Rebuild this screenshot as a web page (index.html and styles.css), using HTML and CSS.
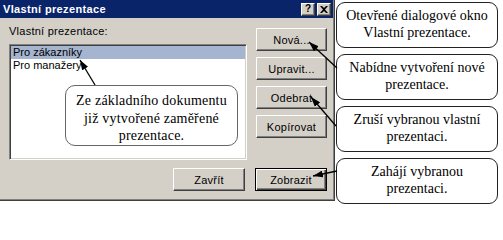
FILE: index.html
```html
<!DOCTYPE html>
<html lang="cs">
<head>
<meta charset="utf-8">
<title>Vlastní prezentace</title>
<link rel="stylesheet" href="styles.css">
</head>
<body>
<div class="page">
  <div class="dialog">
    <div class="titlebar">
      <span class="title">Vlastní prezentace</span>
      <div class="tb-buttons">
        <span class="tb-btn help">?</span>
        <span class="tb-btn close"><svg width="8" height="7" viewBox="0 0 8 7"><path d="M0,0 L2,0 L4,2 L6,0 L8,0 L5,3.5 L8,7 L6,7 L4,5 L2,7 L0,7 L3,3.5 Z" fill="#000"/></svg></span>
      </div>
    </div>
    <div class="body">
      <div class="main">
        <div class="left">
          <div class="label">Vlastní prezentace:</div>
          <div class="list">
            <div class="item selected">Pro zákazníky</div>
            <div class="item">Pro manažery</div>
          </div>
        </div>
        <div class="side">
          <button class="btn">Nová...</button>
          <button class="btn">Upravit...</button>
          <button class="btn">Odebrat</button>
          <button class="btn">Kopírovat</button>
        </div>
      </div>
      <div class="footer">
        <button class="btn">Zavřít</button>
        <button class="btn default">Zobrazit</button>
      </div>
    </div>
  </div>

  <div class="notes">
    <div class="note">Otevřené dialogové okno<br>Vlastní prezentace.</div>
    <div class="note">Nabídne vytvoření nové<br>prezentace.</div>
    <div class="note">Zruší vybranou vlastní<br>prezentaci.</div>
    <div class="note">Zahájí vybranou<br>prezentaci.</div>
  </div>

  <div class="note big">Ze základního dokumentu<br>již vytvořené zaměřené<br>prezentace.</div>

  <svg class="arrows" width="503" height="217" viewBox="0 0 503 217">
    <defs>
      <marker id="ah" viewBox="0 0 10 7" refX="10" refY="3.5" markerWidth="10" markerHeight="7" markerUnits="userSpaceOnUse" orient="auto">
        <path d="M0,0 L10,3.5 L0,7 Z" fill="#000"/>
      </marker>
    </defs>
    <line x1="95" y1="85" x2="80" y2="60" stroke="#000" stroke-width="1.3" marker-end="url(#ah)"/>
    <line x1="337" y1="68" x2="309" y2="42" stroke="#000" stroke-width="1.3" marker-end="url(#ah)"/>
    <line x1="336" y1="126" x2="311" y2="97" stroke="#000" stroke-width="1.3" marker-end="url(#ah)"/>
    <line x1="337" y1="171" x2="313" y2="176" stroke="#000" stroke-width="1.3" marker-end="url(#ah)"/>
  </svg>
</div>
</body>
</html>
```

FILE: styles.css
```css
* { box-sizing: border-box; }

html, body {
  margin: 0;
  padding: 0;
  background: #fff;
}

.page {
  position: relative;
  width: 503px;
  height: 217px;
  display: flex;
  align-items: flex-start;
  background: #fff;
  overflow: hidden;
}

.dialog {
  width: 335px;
  height: 201px;
  background: #d4d0c8;
  border-right: 1px solid #404040;
  border-bottom: 1px solid #404040;
  box-shadow: inset -1px -1px #808080;
  font-family: "Liberation Sans", Arial, sans-serif;
  font-size: 11px;
  letter-spacing: 0.25px;
  color: #000;
  flex: none;
}

.titlebar {
  width: 333px;
  height: 18px;
  background: #0a246a;
  display: flex;
  align-items: center;
  justify-content: space-between;
  padding: 0 2px 0 3px;
}

.title {
  color: #fff;
  font-weight: bold;
  font-size: 11px;
  letter-spacing: 0.35px;
}

.tb-buttons {
  display: flex;
  gap: 2px;
}

.tb-btn {
  width: 14px;
  height: 13px;
  background: #d4d0c8;
  border: 1px solid;
  border-color: #fff #404040 #404040 #fff;
  box-shadow: inset -1px -1px #808080;
  display: flex;
  align-items: center;
  justify-content: center;
  font-weight: bold;
  font-size: 10px;
  line-height: 1;
  letter-spacing: 0;
  color: #000;
}

.body {
  padding: 7px 0 0 9px;
}

.main {
  display: flex;
  gap: 9px;
}

.left {
  width: 238px;
}

.label {
  height: 19px;
  line-height: 13px;
}

.list {
  height: 116px;
  background: #fff;
  border: 1px solid;
  border-color: #808080 #fff #fff #808080;
  box-shadow: inset 1px 1px #404040, inset -1px -1px #d4d0c8;
  padding: 1px 1px 0 1px;
}

.item {
  height: 13px;
  line-height: 13px;
  padding-left: 2px;
  letter-spacing: 0;
}

.item.selected {
  background: #a6b5cf;
}

.side {
  display: flex;
  flex-direction: column;
  gap: 6px;
  padding-top: 3px;
}

.btn {
  width: 71px;
  height: 23px;
  margin: 0;
  padding: 0;
  background: #d4d0c8;
  border: 1px solid;
  border-color: #fff #404040 #404040 #fff;
  box-shadow: inset -1px -1px #808080;
  font-family: "Liberation Sans", Arial, sans-serif;
  font-size: 11px;
  letter-spacing: 0.25px;
  color: #000;
  border-radius: 0;
}

.footer {
  width: 318px;
  margin-top: 8px;
  display: flex;
  justify-content: flex-end;
  gap: 10px;
}

.footer .btn {
  width: 72px;
}

.btn.default {
  border: 1px solid #000;
  box-shadow: inset 1px 1px #fff, inset -1px -1px #404040, inset -2px -2px #808080;
}

.notes {
  margin-left: 1px;
  margin-top: 2px;
  width: 162px;
  display: flex;
  flex-direction: column;
  gap: 6px;
}

.note {
  height: 46px;
  background: #fff;
  border: 1.5px solid #222;
  border-radius: 9px;
  font-family: "Liberation Serif", "Times New Roman", serif;
  font-size: 14px;
  line-height: 17px;
  text-align: center;
  padding-top: 4px;
  color: #000;
}

.note.big {
  position: absolute;
  left: 65px;
  top: 85px;
  width: 173px;
  height: 61px;
  border-color: #666;
  border-radius: 10px;
  padding-top: 6px;
  line-height: 17.5px;
  letter-spacing: 0.2px;
}

.arrows {
  position: absolute;
  left: 0;
  top: 0;
  pointer-events: none;
}
```
